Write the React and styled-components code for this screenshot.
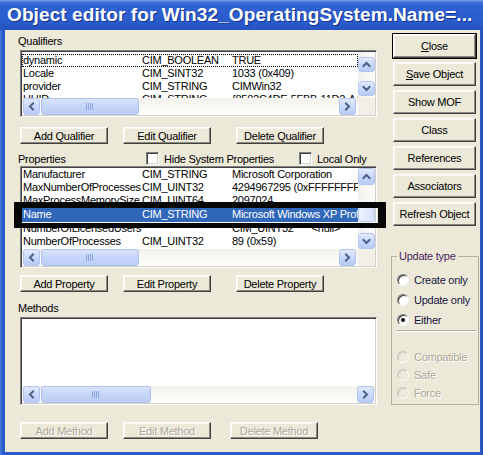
import React from "react";
import styled, { createGlobalStyle } from "styled-components";

const GlobalStyle = createGlobalStyle`
  html, body {
    margin: 0;
    padding: 0;
    width: 483px;
    height: 455px;
    overflow: hidden;
    background: #2a5bcb;
  }
  body {
    font-family: "Liberation Sans", Arial, sans-serif;
  }
  * {
    box-sizing: border-box;
  }
`;

const qualifiers = [
  { name: "dynamic", type: "CIM_BOOLEAN", value: "TRUE", focus: true },
  { name: "Locale", type: "CIM_SINT32", value: "1033 (0x409)" },
  { name: "provider", type: "CIM_STRING", value: "CIMWin32" },
  { name: "UUID", type: "CIM_STRING", value: "{8502C4DE-5FBB-11D2-AAC1-006008C78BC7}" },
];

const properties = [
  { name: "Manufacturer", type: "CIM_STRING", value: "Microsoft Corporation" },
  { name: "MaxNumberOfProcesses", type: "CIM_UINT32", value: "4294967295 (0xFFFFFFFF)" },
  { name: "MaxProcessMemorySize", type: "CIM_UINT64", value: "2097024" },
  {
    name: "Name",
    type: "CIM_STRING",
    value: "Microsoft Windows XP Professional|C:\\WINDOWS|\\Device\\Harddisk0\\Partition1",
    selected: true,
    h: 15,
  },
  { name: "NumberOfLicensedUsers", type: "", value: "CIM_UINT32", extra: "<null>", wide: true },
  { name: "NumberOfProcesses", type: "CIM_UINT32", value: "89 (0x59)" },
  { name: "NumberOfUsers", type: "CIM_UINT32", value: "2 (0x2)" },
];

const sideButtons = [
  { label: "Close", key: "C", def: true },
  { label: "Save Object", key: "S" },
  { label: "Show MOF" },
  { label: "Class" },
  { label: "References" },
  { label: "Associators" },
  { label: "Refresh Object" },
];

const Window = styled.div`
  width: 483px;
  height: 455px;
  display: flex;
  flex-direction: column;
`;

const TitleBar = styled.div`
  height: 30px;
  flex: none;
  display: flex;
  align-items: center;
  padding: 0 0 1px 7px;
  background: linear-gradient(180deg, #7aa0ea 0, #4675dc 2px, #2f61d2 6px, #2a5bcb 22px, #2553c0 30px);
  color: #fff;
  font-weight: bold;
  font-size: 19px;
  letter-spacing: 0.1px;
  text-shadow: 1px 1px 0 #14338a;
  white-space: nowrap;
`;

const Frame = styled.div`
  flex: 1;
  display: flex;
  padding: 0 3px 3px 5px;
  background: linear-gradient(90deg, #4a78dc 0, #2a5bcb 3px, #2a5bcb calc(100% - 2px), #1d48ad 100%);
`;

const Body = styled.div`
  flex: 1;
  display: flex;
  gap: 14px;
  padding: 0 1px 0 13px;
  background: #ece9d8;
  font-size: 11px;
  letter-spacing: -0.25px;
  color: #000;
`;

const LeftPane = styled.div`
  width: 359px;
  flex: none;
  display: flex;
  flex-direction: column;
  padding-top: 5px;
`;

const RightPane = styled.div`
  width: 88px;
  flex: none;
  display: flex;
  flex-direction: column;
  padding-top: 4px;
`;

const SectionLabel = styled.div`
  height: 13px;
  line-height: 13px;
  margin-top: ${(p) => p.$mt || 0}px;
`;

const ListBox = styled.div`
  position: relative;
  width: 357px;
  height: ${(p) => p.$h}px;
  margin: ${(p) => p.$mt || 0}px 0 0 2px;
  flex: none;
  padding: 1px;
  background: #fff;
  border: 1px solid;
  border-color: #808080 #fff #fff #808080;
  box-shadow: inset 1px 1px 0 #404040, inset -1px -1px 0 #d4d0c8;
  display: grid;
  grid-template-columns: ${(p) => (p.$noV ? "1fr" : "1fr 17px")};
  grid-template-rows: 1fr 17px;
`;

const Rows = styled.div`
  overflow: hidden;
  display: flex;
  flex-direction: column;
  padding-top: ${(p) => p.$pt || 0}px;
  grid-column: ${(p) => (p.$full ? "1 / -1" : "auto")};
`;

const Row = styled.div`
  flex: none;
  display: grid;
  grid-template-columns: 119px 90px 1fr;
  height: ${(p) => p.$h || 13}px;
  line-height: ${(p) => p.$h || 13}px;
  padding-left: 1px;
  white-space: nowrap;
  overflow: hidden;
  background: ${(p) => (p.$selected ? "#3167b9" : "transparent")};
  color: ${(p) => (p.$selected ? "#fff" : "#000")};
  outline: ${(p) => (p.$focus ? "1px dotted #000" : "none")};
  outline-offset: -1px;
`;

const Cell = styled.span`
  overflow: hidden;
  grid-column: ${(p) => (p.$span ? "span 2" : "auto")};
`;

const Extra = styled.span`
  margin-left: 18px;
`;

const VScroll = styled.div`
  display: flex;
  flex-direction: column;
  padding: ${(p) => p.$pad || "0"};
  background: linear-gradient(90deg, #f3f1ec, #fdfdfa);
`;

const HScroll = styled.div`
  grid-column: ${(p) => (p.$full ? "1 / -1" : "1")};
  display: flex;
  align-items: center;
  padding: 0 ${(p) => p.$pr || 0}px 0 1px;
  background: linear-gradient(180deg, #f3f1ec, #fefefb);
`;

const Corner = styled.div`
  background: #f1efe6;
`;

const ArrowBtn = styled.div`
  flex: none;
  width: ${(p) => p.$w || 17}px;
  height: ${(p) => p.$h || 17}px;
  margin-top: ${(p) => (p.$end ? "auto" : "0")};
  margin-left: ${(p) => (p.$push ? "auto" : "0")};
  border: 1px solid #b3c6ef;
  border-radius: 3px;
  background: linear-gradient(180deg, #e2eafd 0%, #c7d6fb 55%, #b9ccf6 100%);
  display: flex;
  align-items: center;
  justify-content: center;
`;

const VThumb = styled.div`
  flex: none;
  height: ${(p) => p.$h}px;
  margin-top: ${(p) => p.$mt}px;
  border: 1px solid #b3c6ef;
  border-radius: 3px;
  background: linear-gradient(90deg, #eef3fe, #d6e1fb);
`;

const HThumb = styled.div`
  flex: none;
  width: ${(p) => p.$w}px;
  height: 17px;
  margin-left: 1px;
  border: 1px solid #aec2ee;
  border-radius: 3px;
  background: linear-gradient(180deg, #d9e4fd 0%, #c6d5f9 50%, #bccdf6 100%);
  display: flex;
  align-items: center;
  justify-content: center;
`;

const ButtonRow = styled.div`
  display: flex;
  height: 17px;
  margin-top: ${(p) => p.$mt}px;
  flex: none;
`;

const Btn = styled.button`
  flex: none;
  width: ${(p) => p.$w}px;
  height: ${(p) => p.$h}px;
  margin-left: ${(p) => p.$ml || 0}px;
  padding: 0;
  font: inherit;
  letter-spacing: inherit;
  background: #ece9d8;
  color: ${(p) => (p.disabled ? "#aca899" : "#000")};
  text-shadow: ${(p) => (p.disabled ? "1px 1px 0 #fff" : "none")};
  border: 1px solid;
  border-color: #fff #404040 #404040 #fff;
  box-shadow: inset -1px -1px 0 #8d8a7d, inset 1px 1px 0 #f7f6f0;
  outline: ${(p) => (p.$default ? "1px solid #000" : "none")};
  white-space: nowrap;
  cursor: default;

  u {
    text-decoration: underline;
  }
`;

const SideStack = styled.div`
  display: flex;
  flex-direction: column;
  gap: 4px;
  margin-left: 2px;
`;

const PropRow = styled.div`
  display: flex;
  align-items: center;
  height: 15px;
  margin-top: 7px;
  flex: none;
`;

const PropLabel = styled.span`
  width: 128px;
  flex: none;
  line-height: 13px;
  padding-top: 2px;
`;

const CheckItem = styled.label`
  display: flex;
  align-items: center;
  gap: 5px;
  width: ${(p) => p.$w}px;
  flex: none;
`;

const CheckBox = styled.span`
  width: 13px;
  height: 13px;
  flex: none;
  background: #fff;
  border: 1px solid;
  border-color: #808080 #fff #fff #808080;
  box-shadow: inset 1px 1px 0 #404040, inset -1px -1px 0 #d4d0c8;
`;

const Highlight = styled.div`
  position: absolute;
  left: -7px;
  top: 35px;
  width: 372px;
  height: 26px;
  border-style: solid;
  border-color: #070707;
  border-width: 6px 8px 5px 8px;
  pointer-events: none;
`;

const GroupBox = styled.fieldset`
  margin: 24px 0 0;
  padding: 0 2px 4px 5px;
  min-width: 0;
  border: 1px solid #b3b0a0;
  display: flex;
  flex-direction: column;
`;

const Legend = styled.legend`
  padding: 0 2px;
  line-height: 13px;
  color: #4a1f5e;
`;

const RadioRow = styled.label`
  display: flex;
  align-items: center;
  gap: 5px;
  height: 14px;
  margin-top: ${(p) => p.$mt}px;
  color: ${(p) => (p.$disabled ? "#aca899" : "#15153f")};
  text-shadow: ${(p) => (p.$disabled ? "1px 1px 0 #fff" : "none")};
`;

const RadioDot = styled.span`
  position: relative;
  width: 12px;
  height: 12px;
  flex: none;
  border-radius: 50%;
  background: ${(p) => (p.$disabled ? "#ece9d8" : "#fff")};
  border: 1px solid;
  border-color: ${(p) =>
    p.$disabled ? "#c9c6b8 #fbfbf8 #fbfbf8 #c9c6b8" : "#7d7d7d #f4f4f4 #f4f4f4 #7d7d7d"};
  box-shadow: ${(p) => (p.$disabled ? "inset 1px 1px 0 #d8d5c8" : "inset 1px 1px 0 #3e3e3e")};

  &::after {
    content: "";
    display: ${(p) => (p.$checked ? "block" : "none")};
    position: absolute;
    left: 3px;
    top: 3px;
    width: 4px;
    height: 4px;
    border-radius: 50%;
    background: #000;
  }
`;

const Separator = styled.div`
  height: 2px;
  margin-top: 3px;
  border-top: 1px solid #aca899;
  border-bottom: 1px solid #fff;
`;

const Chevron = ({ dir }) => {
  const d = {
    up: "M1.5 6 L4.5 3 L7.5 6",
    down: "M1.5 3 L4.5 6 L7.5 3",
    left: "M6 1.5 L3 4.5 L6 7.5",
    right: "M3 1.5 L6 4.5 L3 7.5",
  }[dir];
  return (
    <svg width="9" height="9" viewBox="0 0 9 9">
      <path d={d} fill="none" stroke="#4d6185" strokeWidth="2" strokeLinecap="square" />
    </svg>
  );
};

const Grip = () => (
  <svg width="8" height="7" viewBox="0 0 8 7">
    {[0, 2, 4, 6].map((x) => (
      <rect key={x} x={x} y="0" width="1" height="7" fill="#8ea6df" />
    ))}
  </svg>
);

const HBar = ({ thumb, full, pr }) => (
  <HScroll $full={full} $pr={pr}>
    <ArrowBtn>
      <Chevron dir="left" />
    </ArrowBtn>
    <HThumb $w={thumb}>
      <Grip />
    </HThumb>
    <ArrowBtn $push>
      <Chevron dir="right" />
    </ArrowBtn>
  </HScroll>
);

const DataRow = ({ r }) => (
  <Row $h={r.h} $selected={r.selected} $focus={r.focus}>
    <Cell $span={r.wide}>{r.name}</Cell>
    {!r.wide && <Cell>{r.type}</Cell>}
    <Cell>
      {r.value}
      {r.extra && <Extra>{r.extra}</Extra>}
    </Cell>
  </Row>
);

export default function App() {
  return (
    <>
      <GlobalStyle />
      <Window>
        <TitleBar>Object editor for Win32_OperatingSystem.Name=...</TitleBar>
        <Frame>
          <Body>
            <LeftPane>
              <SectionLabel>Qualifiers</SectionLabel>
              <ListBox $h={67} $mt={2}>
                <Rows $pt={2}>
                  {qualifiers.map((r) => (
                    <DataRow key={r.name} r={r} />
                  ))}
                </Rows>
                <VScroll $pad="5px 0 2px">
                  <ArrowBtn $h={15}>
                    <Chevron dir="up" />
                  </ArrowBtn>
                  <ArrowBtn $h={15} $end>
                    <Chevron dir="down" />
                  </ArrowBtn>
                </VScroll>
                <HBar thumb={98} pr={2} />
                <Corner />
              </ListBox>

              <ButtonRow $mt={10}>
                <Btn $w={88} $h={17} $ml={2}>Add Qualifier</Btn>
                <Btn $w={88} $h={17} $ml={15}>Edit Qualifier</Btn>
                <Btn $w={88} $h={17} $ml={25}>Delete Qualifier</Btn>
              </ButtonRow>

              <PropRow>
                <PropLabel>Properties</PropLabel>
                <CheckItem $w={153}>
                  <CheckBox />
                  Hide System Properties
                </CheckItem>
                <CheckItem $w={70}>
                  <CheckBox />
                  Local Only
                </CheckItem>
              </PropRow>
              <ListBox $h={102}>
                <Rows>
                  {properties.map((r) => (
                    <DataRow key={r.name} r={r} />
                  ))}
                </Rows>
                <VScroll>
                  <ArrowBtn $h={17}>
                    <Chevron dir="up" />
                  </ArrowBtn>
                  <VThumb $h={15} $mt={22} />
                  <ArrowBtn $h={16} $end>
                    <Chevron dir="down" />
                  </ArrowBtn>
                </VScroll>
                <HBar thumb={98} pr={2} />
                <Corner />
                <Highlight />
              </ListBox>

              <ButtonRow $mt={7}>
                <Btn $w={88} $h={17} $ml={2}>Add Property</Btn>
                <Btn $w={88} $h={17} $ml={15}>Edit Property</Btn>
                <Btn $w={88} $h={17} $ml={25}>Delete Property</Btn>
              </ButtonRow>

              <SectionLabel $mt={10}>Methods</SectionLabel>
              <ListBox $h={88} $mt={2} $noV>
                <Rows $full />
                <HBar thumb={110} full pr={1} />
              </ListBox>

              <ButtonRow $mt={17}>
                <Btn $w={88} $h={17} $ml={2} disabled>Add Method</Btn>
                <Btn $w={88} $h={17} $ml={15} disabled>Edit Method</Btn>
                <Btn $w={88} $h={17} $ml={19} disabled>Delete Method</Btn>
              </ButtonRow>
            </LeftPane>

            <RightPane>
              <SideStack>
                {sideButtons.map((b) => (
                  <Btn key={b.label} $w={83} $h={24} $default={b.def}>
                    {b.key ? (
                      <>
                        <u>{b.key}</u>
                        {b.label.slice(1)}
                      </>
                    ) : (
                      b.label
                    )}
                  </Btn>
                ))}
              </SideStack>

              <GroupBox>
                <Legend>Update type</Legend>
                <RadioRow $mt={10}>
                  <RadioDot />
                  Create only
                </RadioRow>
                <RadioRow $mt={6}>
                  <RadioDot />
                  Update only
                </RadioRow>
                <RadioRow $mt={6}>
                  <RadioDot $checked />
                  Either
                </RadioRow>
                <Separator />
                <RadioRow $mt={18} $disabled>
                  <RadioDot $disabled />
                  Compatible
                </RadioRow>
                <RadioRow $mt={4} $disabled>
                  <RadioDot $disabled />
                  Safe
                </RadioRow>
                <RadioRow $mt={4} $disabled>
                  <RadioDot $disabled />
                  Force
                </RadioRow>
              </GroupBox>
            </RightPane>
          </Body>
        </Frame>
      </Window>
    </>
  );
}
